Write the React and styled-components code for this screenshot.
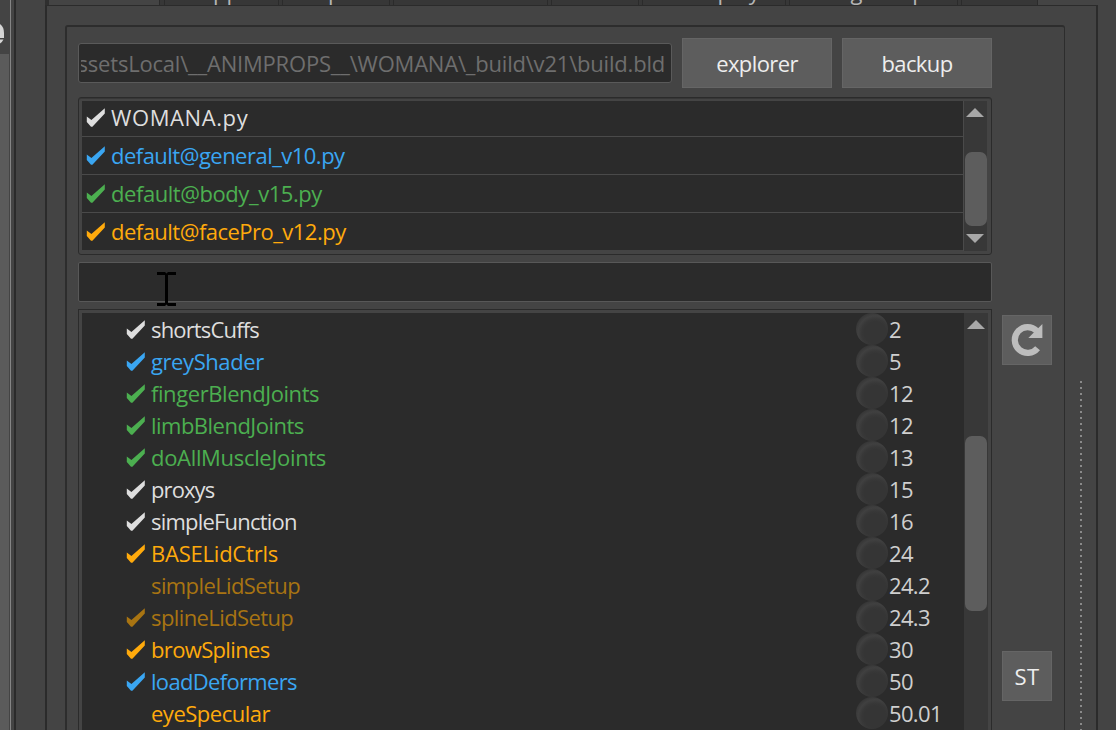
import React from "react";
import styled, { createGlobalStyle } from "styled-components";

const Global = createGlobalStyle`
  * { box-sizing: border-box; }
  body { margin: 0; background: #444; overflow: hidden; font-family: "Open Sans", "Noto Sans", sans-serif; font-size: 22px; color: #d9d9d9; }
`;
const Window = styled.div`display: flex; width: 1116px; height: 730px; overflow: hidden; background: #444;`;
const Dock = styled.aside`width: 16px; flex: none; display: flex; border-right: 2px solid #2b2b2b;`;
const DockBody = styled.div`width: 9px; display: flex; flex-direction: column;`;
const DockTop = styled.div`height: 54px; padding-top: 22px; overflow: hidden; svg { display: block; }`;
const DockFill = styled.div`flex: 1; background: #5b5b5b;`;
const DockEdge = styled.div`width: 1px; margin-left: 1px; background: #858585;`;
const Main = styled.main`width: 1053px; margin-left: 29px; flex: none; display: flex; flex-direction: column;`;
const Tabs = styled.div`height: 5px; flex: none; display: flex; border-left: 4px solid #2f2f2f; overflow: hidden;`;
const Tab = styled.div`
  width: ${(p) => p.$w}px; flex: none; height: 6px; overflow: hidden; padding-left: ${(p) => p.$pad || 0}px; color: #b5b5b5;
  background: ${(p) => (p.$active ? "#444" : "#373737")}; border-right: 1px solid #2b2b2b;
  span { display: block; margin-top: -24px; line-height: 30px; white-space: pre; }
`;
const TabSpace = styled.div`flex: 1; background: #444;`;
const Pane = styled.div`flex: 1; display: flex; border: 2px solid #2b2b2b; border-top-width: 1px; border-bottom: 0; padding: 19px 0 0 18px;`;
const Group = styled.section`width: 1000px; display: flex; flex-direction: column; border: 1px solid #2d2d2d; border-left-width: 2px; border-top-width: 2px; border-bottom: 0; border-radius: 3px 3px 0 0; padding: 11px 0 0 11px;`;
const Label = styled.span`display: block; padding-bottom: ${(p) => p.$lift || 0}px; letter-spacing: ${(p) => p.$ls || 0}px; white-space: pre;`;
const PathRow = styled.div`display: flex; align-items: center; height: 50px; gap: 10px;`;
const PathField = styled.div`width: 594px; height: 40px; background: #2b2b2b; border: 1px solid #5a5a5a; border-radius: 3px; padding: 0 6px 0 2px; color: #6e6e6e; display: flex; align-items: center;`;
const Clip = styled.div`flex: 1; height: 36px; line-height: 36px; overflow: hidden; display: flex; justify-content: flex-end;`;
const Button = styled.button`
  width: ${(p) => p.$w}px; height: 50px; padding: 0; border: 1px solid #656565; background: #5d5d5d; color: #eee;
  font: inherit; display: flex; align-items: center; justify-content: center;
`;
const Files = styled.div`height: 158px; width: 914px; margin-top: 9px; display: flex; border: 1px solid #2b2b2b; border-radius: 3px; padding: 3px; box-shadow: inset 0 1px #373737;`;
const FileRows = styled.div`width: 881px; height: 149px; background: #2b2b2b;`;
const FileRow = styled.div`
  height: 38px; display: flex; align-items: center; padding-left: 4px; border-bottom: 1px solid #4a4a4a; color: ${(p) => p.$c};
  svg { margin-right: 5px; flex: none; }
  &:first-child { height: 36px; padding-bottom: 1px; }
  &:last-child { height: 37px; border: 0; }
`;
const Search = styled.div`position: relative; width: 914px; height: 40px; margin-top: 7px; border: 1px solid #585858; border-radius: 2px; background: #2b2b2b;`;
const Caret = styled.svg`position: absolute; left: 78px; top: 9px;`;
const TreeRow = styled.div`display: flex; margin-top: 7px; gap: 10px; height: 422px;`;
const Tree = styled.div`width: 914px; height: 422px; display: flex; border: 1px solid #2b2b2b; border-bottom: 0; padding: 3px 3px 0;`;
const TreeBody = styled.div`width: 882px; padding-top: 1px; background: #2b2b2b; overflow: hidden;`;
const Item = styled.div`
  height: 32px; display: flex; align-items: center; padding-left: 44px; color: ${(p) => p.$c};
  svg { margin-right: 5px; flex: none; }
`;
const Name = styled.div`width: 705px;`;
const Orb = styled.i`
  width: 32px; height: 32px; margin: 0 1px 2px 0; flex: none; border-radius: 50%;
  background: radial-gradient(circle at 60% 62%, #353535 0 40%, #383838 50%, #404040 62%, #373737 74%);
`;
const Num = styled.div`color: #cfcfcf; padding-bottom: 2px; letter-spacing: -0.65px;`;
const Track = styled.div`width: 24px; background: #383838; display: flex; flex-direction: column; align-items: center; border-left: ${(p) => (p.$line ? 1 : 0)}px solid #4a4a4a; padding-top: ${(p) => p.$pt}px;`;
const Thumb = styled.div`width: 22px; height: ${(p) => p.$h}px; margin: ${(p) => p.$mt}px 0 8px; border-radius: 7px; background: #5d5d5d;`;
const ArrowIcon = styled.svg`flex: none; margin-right: 1px;`;
const Side = styled.div`display: flex; flex-direction: column; gap: 286px; padding-top: 6px;`;
const Grip = styled.div`width: 2px; margin: 356px 0 0 15px; background: repeating-linear-gradient(#8a8a8a 0 2px, transparent 2px 6px);`;

const W = "#dedede", B = "#3aa6f2", G = "#4caf50", O = "#ffaa0c", D = "#a87412";

const Check = ({ on = true }) => (
  <svg width="20" height="22" viewBox="0 0 20 22">
    {on && <path d="M0.8 9.6 L5.4 13 L18.8 1.2 V6.6 L6.4 19.8 H5 L0.8 15 Z" fill="currentColor" />}
  </svg>
);
const Arrow = ({ down }) => (
  <ArrowIcon width="18" height="9" viewBox="0 0 18 9"><path d={down ? "M0 0H18L9 9Z" : "M0 9H18L9 0Z"} fill="#a8a8a8" /></ArrowIcon>
);

const tabs = [
  { w: 111, active: true, t: "" }, { w: 5, t: "" }, { w: 114, t: "support", pad: 24 }, { w: 4, t: "" },
  { w: 107, t: "import", pad: 19 }, { w: 4, t: "" }, { w: 154, t: "" }, { w: 4, t: "" },
  { w: 87, t: "" }, { w: 4, t: "" }, { w: 143, t: "display", pad: 45 }, { w: 4, t: "" },
  { w: 168, t: "rig comp", pad: 46 }, { w: 4, t: "" }, { w: 76, t: "" },
];
const files = [
  ["WOMANA.py", W, 0.6], ["default@general_v10.py", B, -0.52],
  ["default@body_v15.py", G, -0.44], ["default@facePro_v12.py", O, -0.52],
];
const items = [
  ["shortsCuffs", W, "2", 1, -0.84], ["greyShader", B, "5", 1, -0.42], ["fingerBlendJoints", G, "12", 1, -0.42],
  ["limbBlendJoints", G, "12", 1, -0.52], ["doAllMuscleJoints", G, "13", 1, -0.32], ["proxys", W, "15", 1, -0.9],
  ["simpleFunction", W, "16", 1, -0.8], ["BASELidCtrls", O, "24", 1, -0.22], ["simpleLidSetup", D, "24.2", 0, -0.6],
  ["splineLidSetup", D, "24.3", 1, -0.6], ["browSplines", O, "30", 1, -0.65], ["loadDeformers", B, "50", 1, -0.68],
  ["eyeSpecular", O, "50.01", 0, -0.48],
];

export default function App() {
  return (
    <Window>
      <Global />
      <Dock>
        <DockBody>
          <DockTop>
            <svg width="9" height="26" viewBox="0 0 9 26"><path d="M0 2Q4 5 4 11V16H0Z" fill="#d5d5d5" /><path d="M0 17.5H3.5Q2 20.5 0 21.5Z" fill="#d5d5d5" /></svg>
          </DockTop>
          <DockFill />
        </DockBody>
        <DockEdge />
      </Dock>
      <Main>
        <Tabs>
          {tabs.map((t, i) => <Tab key={i} $w={t.w} $active={t.active} $pad={t.pad}><span>{t.t}</span></Tab>)}
          <TabSpace />
        </Tabs>
        <Pane>
          <Group>
            <PathRow>
              <PathField><Clip><Label $ls={-0.2}>{"\\assetsLocal\\__ANIMPROPS__\\WOMANA\\_build\\v21\\build.bld"}</Label></Clip></PathField>
              <Button $w={150}><Label $ls={-0.6}>explorer</Label></Button>
              <Button $w={150}><Label $ls={-0.6}>backup</Label></Button>
            </PathRow>
            <Files>
              <FileRows>{files.map(([n, c, ls]) => <FileRow key={n} $c={c}><Check /><Label $lift={2} $ls={ls}>{n}</Label></FileRow>)}</FileRows>
              <Track $line $pt={7}><Arrow /><Thumb $h={74} $mt={35} /><Arrow down /></Track>
            </Files>
            <Search>
              <Caret width="19" height="34" viewBox="0 0 19 34"><path d="M0 0H8L9.5 1.5L11 0H19V3H11V31H19V34H11L9.5 32.5L8 34H0V31H8V3H0Z" fill="#000" /></Caret>
            </Search>
            <TreeRow>
              <Tree>
                <TreeBody>
                  {items.map(([n, c, v, on, ls]) => (
                    <Item key={n} $c={c}><Check on={!!on} /><Name><Label $lift={2} $ls={ls}>{n}</Label></Name><Orb /><Num>{v}</Num></Item>
                  ))}
                </TreeBody>
                <Track $pt={7}><Arrow /><Thumb $h={175} $mt={107} /></Track>
              </Tree>
              <Side>
                <Button $w={50}>
                  <svg width="34" height="34" viewBox="0 0 34 34"><path d="M27.6 25.3A12.9 12.9 0 1 1 26.8 7.9" fill="none" stroke="#bdbdbd" strokeWidth="6.2" /><path d="M32.4 1V15H18.3Z" fill="#bdbdbd" /></svg>
                </Button>
                <Button $w={50}><Label $ls={0.3}>ST</Label></Button>
              </Side>
            </TreeRow>
          </Group>
          <Grip />
        </Pane>
      </Main>
    </Window>
  );
}
